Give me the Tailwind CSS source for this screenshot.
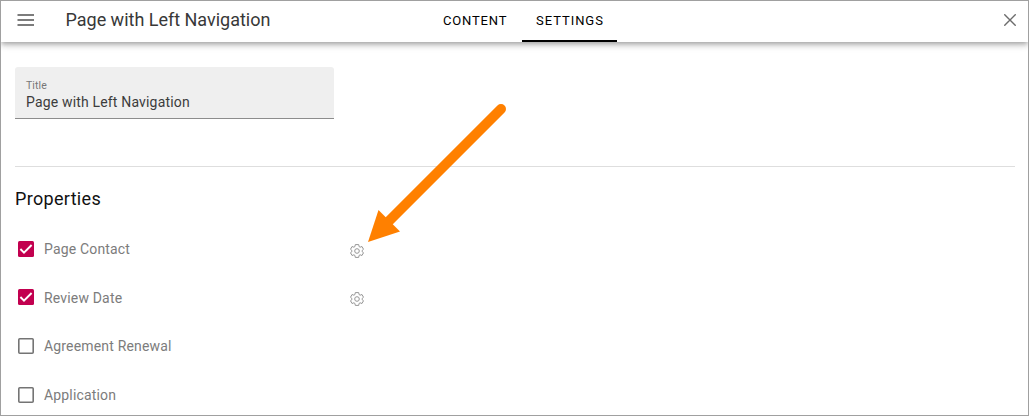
<!DOCTYPE html>
<html lang="en">
<head>
<meta charset="utf-8">
<title>Page with Left Navigation</title>
<script src="https://cdn.jsdelivr.net/npm/@tailwindcss/browser@4"></script>
</head>
<body class="bg-white font-['Roboto',sans-serif]">
<div class="relative flex h-[416px] w-[1029px] flex-col overflow-hidden border border-[#a0a0a0] bg-white">
  <header class="flex h-[41px] shrink-0 items-stretch bg-white shadow-[0_2px_4px_-1px_rgba(0,0,0,0.2),0_4px_5px_0_rgba(0,0,0,0.14),0_1px_10px_0_rgba(0,0,0,0.12)]">
    <button class="flex w-[64px] items-start pt-[13px] pl-4" aria-label="Menu">
      <svg class="h-3 w-[17px]" viewBox="0 0 17 12" fill="#7c7c7c"><path d="M.5 0H17v1.900H.5zM.5 5.100H17V7H.5zM.5 10.100H17V12H.5z"/></svg>
    </button>
    <h1 class="w-[362px] whitespace-nowrap pl-[0.5px] text-[18px] leading-[38px] font-normal tracking-[-0.01px] text-[#383838]">Page with Left Navigation</h1>
    <nav class="flex text-[13px] leading-[39px] font-normal text-black">
      <a class="w-[95px] pl-[16px] tracking-[0.83px]">CONTENT</a>
      <a class="w-[95px] border-b-2 border-black pl-[14px] tracking-[0.95px]">SETTINGS</a>
    </nav>
    <button class="ml-auto flex w-[24px] items-start pt-[13px]" aria-label="Close">
      <svg class="h-3 w-3" viewBox="0 0 12 12" stroke="#6c6c6c" stroke-width="1.4"><path d="M.3.3l11.4 11.4M11.7.3L.3 11.7"/></svg>
    </button>
  </header>
  <main class="flex flex-col px-[14px] pt-[25px]">
    <label class="flex h-[52px] w-[319px] flex-col rounded-t-[3px] border-b border-[#8c8c8c] bg-[#efefef] pt-[12px] pl-[11px]">
      <span class="text-[10.5px] leading-[14px] tracking-[0.1px] text-[#777]">Title</span>
      <span class="text-[14px] leading-[19px] tracking-[0.17px] text-[#3c3c3c]">Page with Left Navigation</span>
    </label>
    <hr class="mt-[47px] w-[1000px] border-t border-[#dedede]">
    <h2 class="mt-[20px] text-[18px] leading-6 tracking-[0.32px] text-[#111]">Properties</h2>
    <ul class="mt-[14px] grid auto-rows-[48.6px] text-[14px] tracking-[0.17px] text-[#7c7c7c]">
      <li class="flex items-center pl-[3px]">
        <svg class="h-4 w-4" viewBox="0 0 16 16"><rect width="16" height="16" rx="1.5" fill="#c2004f"/><path d="M2.4 8l3.6 3.6L13.6 4" fill="none" stroke="#fff" stroke-width="1.9"/></svg>
        <span class="w-[317px] pl-[10px]">Page Contact</span>
        <svg class="mt-[3px] ml-[-1px] h-[14px] w-[14px]" viewBox="0 0 14 14" fill="none" stroke="#969696"><path d="M5.3.6h3.4l.4 2 1 .6 1.9-.7 1.5 2.8L12 6.6v.9l1.5 1.2-1.5 2.8-1.9-.7-1 .6-.4 2H5.3l-.4-2-1-.6-1.9.7L.5 8.7 2 7.5v-.9L.5 5.3 2 2.5l1.9.7 1-.6z"/><circle cx="7" cy="7" r="2.3"/></svg>
      </li>
      <li class="flex items-center pl-[3px]">
        <svg class="mb-px h-4 w-4" viewBox="0 0 16 16"><rect width="16" height="16" rx="1.5" fill="#c2004f"/><path d="M2.4 8l3.6 3.6L13.6 4" fill="none" stroke="#fff" stroke-width="1.9"/></svg>
        <span class="w-[317px] pt-px pl-[10px]">Review Date</span>
        <svg class="mt-[3px] ml-[-1px] h-[14px] w-[14px]" viewBox="0 0 14 14" fill="none" stroke="#969696"><path d="M5.3.6h3.4l.4 2 1 .6 1.9-.7 1.5 2.8L12 6.6v.9l1.5 1.2-1.5 2.8-1.9-.7-1 .6-.4 2H5.3l-.4-2-1-.6-1.9.7L.5 8.7 2 7.5v-.9L.5 5.3 2 2.5l1.9.7 1-.6z"/><circle cx="7" cy="7" r="2.3"/></svg>
      </li>
      <li class="flex items-center pl-[3px]">
        <svg class="h-4 w-4" viewBox="0 0 16 16" fill="none" stroke="#747474" stroke-width="1.6"><rect x=".8" y=".8" width="14.400" height="14.400" rx="1"/></svg>
        <span class="pl-[10px]">Agreement Renewal</span>
      </li>
      <li class="flex items-center pl-[3px]">
        <svg class="h-4 w-4" viewBox="0 0 16 16" fill="none" stroke="#747474" stroke-width="1.6"><rect x=".8" y=".8" width="14.400" height="14.400" rx="1"/></svg>
        <span class="pl-[10px]">Application</span>
      </li>
    </ul>
  </main>
  <svg class="pointer-events-none absolute -top-px -left-px h-[416px] w-[1029px]" viewBox="0 0 1029 416" fill="#ff8000"><path d="M501 109L388 222" stroke="#ff8000" stroke-width="10" stroke-linecap="round"/><path d="M368 242L378.500 210l21.500 21.500z"/></svg>
</div>
</body>
</html>
